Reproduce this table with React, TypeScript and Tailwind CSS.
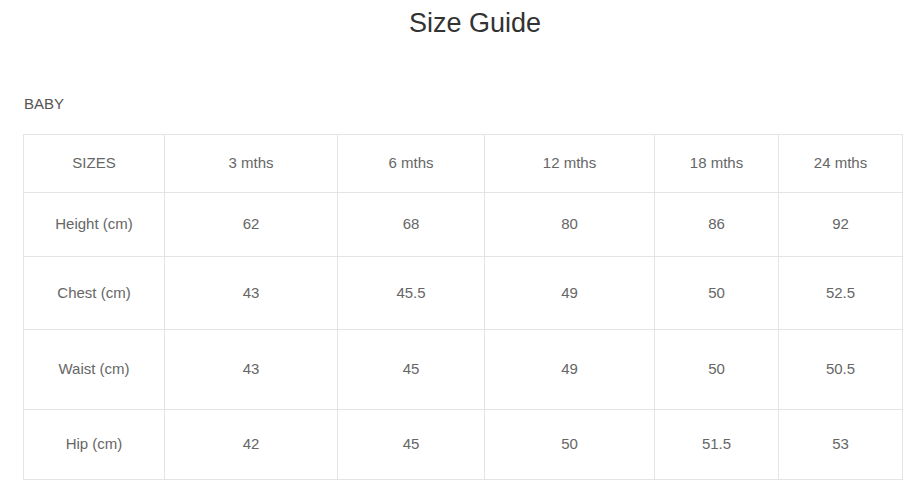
const headers = ['SIZES', '3 mths', '6 mths', '12 mths', '18 mths', '24 mths'];

const rows: { label: string; values: string[]; h: string }[] = [
  { label: 'Height (cm)', values: ['62', '68', '80', '86', '92'], h: 'h-[64px]' },
  { label: 'Chest (cm)', values: ['43', '45.5', '49', '50', '52.5'], h: 'h-[73px]' },
  { label: 'Waist (cm)', values: ['43', '45', '49', '50', '50.5'], h: 'h-[80px]' },
  { label: 'Hip (cm)', values: ['42', '45', '50', '51.5', '53'], h: 'h-[70px]' },
];

const colWidths = ['w-[141px]', 'w-[173px]', 'w-[147px]', 'w-[170px]', 'w-[124px]', 'w-[124px]'];

export default function App() {
  return (
    <div className="w-[923px] h-[492px] bg-white overflow-hidden font-['Liberation_Sans',Arial,sans-serif]">
      <h1 className="pt-[6px] pl-[27px] text-center text-[27px] leading-[34px] text-[#333]">Size Guide</h1>
      <div className="mt-[55px] pl-[24px] text-[15px] leading-[18px] text-[#555]">BABY</div>
      <table className="mt-[21px] ml-[23px] w-[880px] table-fixed border-collapse text-[15px] text-[#666]">
        <colgroup>
          {colWidths.map((w, i) => (
            <col key={i} className={w} />
          ))}
        </colgroup>
        <thead>
          <tr className="h-[58px]">
            {headers.map((h) => (
              <th key={h} className="border border-[#e4e4e4] font-normal text-center align-middle">
                {h}
              </th>
            ))}
          </tr>
        </thead>
        <tbody>
          {rows.map((r) => (
            <tr key={r.label} className={r.h}>
              <td className="border border-[#e4e4e4] text-center align-middle">{r.label}</td>
              {r.values.map((v, i) => (
                <td key={i} className="border border-[#e4e4e4] text-center align-middle">
                  {v}
                </td>
              ))}
            </tr>
          ))}
        </tbody>
      </table>
    </div>
  );
}
